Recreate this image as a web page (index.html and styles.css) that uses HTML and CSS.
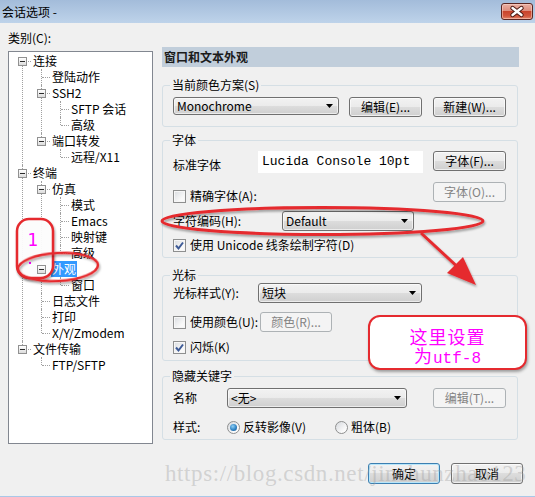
FILE: index.html
```html
<!DOCTYPE html>
<html lang="zh-CN">
<head>
<meta charset="utf-8">
<title>会话选项</title>
<link rel="stylesheet" href="styles.css">
</head>
<body>
<div class="window">
  <div class="titlebar">
    <span class="title">会话选项 -</span>
    <span class="close"><svg width="30" height="15" viewBox="0 0 30 15"><path d="M10.5 4 L19.5 11 M19.5 4 L10.5 11" stroke="#4a1a14" stroke-width="4.4" stroke-linecap="round"/><path d="M10.5 4 L19.5 11 M19.5 4 L10.5 11" stroke="#fff" stroke-width="2.4" stroke-linecap="round"/></svg></span>
  </div>

  <div class="content">
    <div class="left">
      <div class="cat">类别(C):</div>
      <div class="treebox">
        <ul class="tree">
          <li><div class="row"><span class="gut"><i class="box"></i></span><span class="lbl">连接</span></div>
            <ul>
              <li><div class="row"><span class="gut"></span><span class="lbl">登陆动作</span></div></li>
              <li><div class="row"><span class="gut"><i class="box"></i></span><span class="lbl">SSH2</span></div>
                <ul>
                  <li><div class="row"><span class="gut"></span><span class="lbl">SFTP 会话</span></div></li>
                  <li><div class="row"><span class="gut"></span><span class="lbl">高级</span></div></li>
                </ul>
              </li>
              <li><div class="row"><span class="gut"><i class="box"></i></span><span class="lbl">端口转发</span></div>
                <ul>
                  <li><div class="row"><span class="gut"></span><span class="lbl">远程/X11</span></div></li>
                </ul>
              </li>
            </ul>
          </li>
          <li><div class="row"><span class="gut"><i class="box"></i></span><span class="lbl">终端</span></div>
            <ul>
              <li><div class="row"><span class="gut"><i class="box"></i></span><span class="lbl">仿真</span></div>
                <ul>
                  <li><div class="row"><span class="gut"></span><span class="lbl">模式</span></div></li>
                  <li><div class="row"><span class="gut"></span><span class="lbl">Emacs</span></div></li>
                  <li><div class="row"><span class="gut"></span><span class="lbl">映射键</span></div></li>
                  <li><div class="row"><span class="gut"></span><span class="lbl">高级</span></div></li>
                </ul>
              </li>
              <li><div class="row"><span class="gut"><i class="box"></i></span><span class="lbl sel">外观</span></div>
                <ul>
                  <li><div class="row"><span class="gut"></span><span class="lbl">窗口</span></div></li>
                </ul>
              </li>
              <li><div class="row"><span class="gut"></span><span class="lbl">日志文件</span></div></li>
              <li><div class="row"><span class="gut"></span><span class="lbl">打印</span></div></li>
              <li><div class="row"><span class="gut"></span><span class="lbl">X/Y/Zmodem</span></div></li>
            </ul>
          </li>
          <li><div class="row"><span class="gut"><i class="box"></i></span><span class="lbl">文件传输</span></div>
            <ul>
              <li><div class="row"><span class="gut"></span><span class="lbl">FTP/SFTP</span></div></li>
            </ul>
          </li>
        </ul>
      </div>
    </div>

    <div class="right">
      <div class="hdr">窗口和文本外观</div>

      <fieldset class="grp g1">
        <legend>当前颜色方案(S)</legend>
        <div class="frow r-scheme">
          <div class="combo w-mono">Monochrome</div>
          <button class="btn b-edit">编辑(E)...</button>
          <button class="btn b-new">新建(W)...</button>
        </div>
      </fieldset>

      <fieldset class="grp g2">
        <legend>字体</legend>
        <div class="frow r-font">
          <span class="flabel w85 low">标准字体</span>
          <div class="fontbox">Lucida Console 10pt</div>
          <button class="btn push">字体(F)...</button>
        </div>
        <div class="frow r-exact">
          <label class="chk low"><span class="cb"></span>精确字体(A):</label>
          <button class="btn dis push">字体(O)...</button>
        </div>
        <div class="frow r-enc">
          <span class="flabel w109">字符编码(H):</span>
          <div class="combo w-enc">Default</div>
        </div>
        <div class="frow r-uni">
          <label class="chk"><span class="cb on"><svg width="11" height="11" viewBox="0 0 11 11"><path d="M2 5.5 L4.5 8.5 L9 2.5" fill="none" stroke="#3d5a96" stroke-width="2"/></svg></span>使用 Unicode 线条绘制字符(D)</label>
        </div>
      </fieldset>

      <fieldset class="grp g3">
        <legend>光标</legend>
        <div class="frow r-cur">
          <span class="flabel w85">光标样式(Y):</span>
          <div class="combo w-cur">短块</div>
        </div>
        <div class="frow r-color">
          <label class="chk w87"><span class="cb"></span>使用颜色(U):</label>
          <button class="btn dis b-color">颜色(R)...</button>
        </div>
        <div class="frow r-blink">
          <label class="chk"><span class="cb on"><svg width="11" height="11" viewBox="0 0 11 11"><path d="M2 5.5 L4.5 8.5 L9 2.5" fill="none" stroke="#3d5a96" stroke-width="2"/></svg></span>闪烁(K)</label>
        </div>
      </fieldset>

      <fieldset class="grp g4">
        <legend>隐藏关键字</legend>
        <div class="frow r-name">
          <span class="flabel w54">名称</span>
          <div class="combo w-name">&lt;无&gt;</div>
          <button class="btn dis push">编辑(T)...</button>
        </div>
        <div class="frow r-style">
          <span class="flabel w54">样式:</span>
          <label class="rad w108"><span class="rb on"></span>反转影像(V)</label>
          <label class="rad"><span class="rb"></span>粗体(B)</label>
        </div>
      </fieldset>
    </div>
  </div>

  <div class="footer">
    <button class="btn def">确定</button>
    <button class="btn">取消</button>
  </div>

  <svg class="marks" width="535" height="497" viewBox="0 0 535 497">
    <defs>
      <filter id="sh" x="-30%" y="-30%" width="160%" height="180%">
        <feDropShadow dx="1" dy="2" stdDeviation="1.2" flood-color="#000" flood-opacity="0.35"/>
      </filter>
    </defs>
    <rect x="17" y="219" width="36" height="59" rx="12" fill="#fff" fill-opacity="0.93" stroke="#e52a2f" stroke-width="2.5" filter="url(#sh)"/>
    <text x="33" y="246" class="one">1</text>
    <rect x="29" y="262" width="2" height="2" fill="#ff00ff"/>
    <ellipse cx="58" cy="267" rx="40" ry="14" fill="none" stroke="#e52a2f" stroke-width="2.5" filter="url(#sh)" transform="rotate(-3 58 267)"/>
    <ellipse cx="322.5" cy="221" rx="160.5" ry="13.5" fill="none" stroke="#e52a2f" stroke-width="3" filter="url(#sh)"/>
    <g filter="url(#sh)">
      <path d="M421 233 L462 271" stroke="#e52a2f" stroke-width="3"/>
      <polygon points="476,285 447,273 463,257" fill="#e52a2f"/>
    </g>
  </svg>

  <div class="note"><div class="nl">这里设置</div><div class="nl">为<span class="mono">utf-8</span></div></div>
  <div class="watermark">https://blog.csdn.net/jinchunzhao123</div>
</div>
</body>
</html>
```

FILE: styles.css
```css
* { box-sizing: border-box; }

body {
  margin: 0;
  width: 535px;
  height: 497px;
  overflow: hidden;
  background: #f0f0f0;
  font-family: "Noto Sans CJK SC", "Noto Sans", sans-serif;
  font-size: 12px;
  line-height: 16px;
  color: #000;
}

.window {
  position: relative;
  width: 535px;
  height: 497px;
  display: flex;
  flex-direction: column;
  border-bottom: 1px solid #a9c8e8;
}

/* title bar */
.titlebar {
  height: 23px;
  flex: none;
  display: flex;
  align-items: center;
  justify-content: space-between;
  padding: 0 2px 0 2px;
  background: linear-gradient(#a3bcda, #bed3ea);
}
.title { line-height: 16px; }
.close {
  width: 32px;
  height: 17px;
  display: flex;
  align-items: center;
  justify-content: center;
  border: 1px solid #5b2622;
  border-radius: 3px;
  background: linear-gradient(#eab0a3 0%, #de8d7d 45%, #c8442d 50%, #d2563d 80%, #e2876c 100%);
  box-shadow: inset 0 0 0 1px rgba(255, 220, 210, 0.5);
}

/* main area */
.content {
  display: flex;
  align-items: flex-start;
  gap: 9px;
  padding: 0 16px 0 8px;
}

.left {
  width: 145px;
  flex: none;
  padding-top: 7px;
  display: flex;
  flex-direction: column;
}
.cat { height: 16px; margin-bottom: 5px; }
.treebox {
  height: 393px;
  background: #fff;
  border: 1px solid #828790;
  padding-top: 1px;
}

/* tree */
.tree, .tree ul { list-style: none; margin: 0; padding: 0; }
.tree ul { padding-left: 19px; }
.tree li { position: relative; }
.tree li::before {
  content: "";
  position: absolute;
  left: 13px;
  top: 0;
  bottom: 0;
  border-left: 1px dotted #a0a0a0;
}
.tree li:last-child::before { bottom: auto; height: 8px; }
.tree > li:first-child::before { top: 8px; }
.row {
  position: relative;
  display: flex;
  align-items: center;
  height: 16px;
}
.row::before {
  content: "";
  position: absolute;
  left: 14px;
  top: 8px;
  width: 8px;
  border-top: 1px dotted #a0a0a0;
}
.gut { width: 23px; height: 16px; flex: none; position: relative; }
.box {
  position: absolute;
  left: 9px;
  top: 4px;
  width: 9px;
  height: 9px;
  border: 1px solid #919191;
  background: linear-gradient(#ffffff, #dcdcdc);
  z-index: 1;
}
.box::after {
  content: "";
  position: absolute;
  left: 1px;
  top: 3px;
  width: 5px;
  height: 1px;
  background: #2b2b2b;
}
.lbl { padding: 0 1px; line-height: 16px; white-space: nowrap; }
.lbl.sel { background: #3399ff; color: #fff; }

/* right panel */
.right { width: 357px; flex: none; padding-top: 24px; }
.hdr {
  height: 20px;
  line-height: 20px;
  padding-left: 2px;
  background: #c1cedb;
  font-weight: bold;
  color: #1b1b1b;
}
.grp {
  margin: 0;
  min-width: 0;
  width: 356px;
  padding: 0 11px 0 10px;
  border: 1px solid #d5dfe5;
  border-radius: 3px;
}
.grp legend {
  padding: 0 2px;
  margin-left: -3px;
  line-height: 14px;
}
.g1 { margin-top: 11px; height: 49px; }
.g2 { margin-top: 6px; height: 125px; }
.g3 { margin-top: 10px; height: 93px; }
.g4 { margin-top: 8px; height: 71px; }

.frow { display: flex; align-items: center; }
.r-scheme { margin-top: 5px; align-items: flex-start; }
.r-font { margin-top: 4px; height: 22px; align-items: flex-start; }
.r-exact { margin-top: 9px; height: 20px; align-items: flex-start; }
.r-enc { margin-top: 9px; height: 20px; }
.r-uni { margin-top: 6px; height: 16px; }
.r-cur { margin-top: 1px; height: 20px; }
.r-color { margin-top: 9px; height: 20px; }
.r-blink { margin-top: 7px; height: 16px; }
.r-name { margin-top: 5px; height: 20px; }
.r-style { margin-top: 11px; height: 16px; }

.flabel { flex: none; white-space: nowrap; }
.low { margin-top: 6px; }
.w54 { width: 54px; }
.w85 { width: 85px; }
.w87 { width: 87px; }
.w108 { width: 108px; }
.w109 { width: 109px; }
.push { margin-left: auto; }

/* buttons */
.btn {
  flex: none;
  width: 73px;
  height: 20px;
  padding: 0;
  font: inherit;
  line-height: 18px;
  color: #000;
  text-align: center;
  border: 1px solid #707070;
  border-radius: 3px;
  background: linear-gradient(#f2f2f2 0%, #ebebeb 50%, #dddddd 50%, #cfcfcf 100%);
  box-shadow: inset 0 0 0 1px rgba(255, 255, 255, 0.65);
}
.btn.dis {
  border-color: #adb2b5;
  background: #f4f4f4;
  color: #838383;
  box-shadow: none;
}
.b-edit { margin-left: 10px; }
.b-new { margin-left: 11px; }
.b-color { width: 72px; }

/* combo boxes */
.combo {
  position: relative;
  flex: none;
  height: 20px;
  line-height: 18px;
  padding-left: 3px;
  border: 1px solid #707070;
  border-radius: 3px;
  background: linear-gradient(#f2f2f2 0%, #ebebeb 50%, #dddddd 50%, #cfcfcf 100%);
  box-shadow: inset 0 0 0 1px rgba(255, 255, 255, 0.6);
  white-space: nowrap;
}
.combo::after {
  content: "";
  position: absolute;
  right: 5px;
  top: 7px;
  width: 7px;
  height: 4px;
  background: #000;
  clip-path: polygon(0 0, 100% 0, 50% 100%);
}
.w-mono { width: 166px; height: 18px; line-height: 16px; }
.w-mono::after { top: 6px; }
.w-enc { width: 132px; }
.w-cur { width: 164px; }
.w-name { width: 180px; }

.fontbox {
  flex: none;
  width: 165px;
  height: 22px;
  padding-left: 4px;
  background: #fff;
  font-family: "Liberation Mono", monospace;
  font-size: 13px;
  line-height: 22px;
}

/* check boxes and radios */
.chk, .rad {
  display: flex;
  align-items: center;
  flex: none;
  white-space: nowrap;
}
.cb {
  width: 13px;
  height: 13px;
  margin-right: 4px;
  flex: none;
  display: flex;
  align-items: center;
  justify-content: center;
  border: 1px solid #8e8f8f;
  background: linear-gradient(135deg, #d9dce0 0%, #f9f9f9 70%);
  box-shadow: inset 0 0 0 1px #f6f6f6;
}
.rb {
  width: 13px;
  height: 13px;
  margin-right: 3px;
  flex: none;
  border-radius: 50%;
  border: 1px solid #8e8f8f;
  background: linear-gradient(135deg, #d6d9de 0%, #fbfbfb 75%);
  position: relative;
}
.rb.on::after {
  content: "";
  position: absolute;
  left: 2px;
  top: 2px;
  width: 7px;
  height: 7px;
  border-radius: 50%;
  background: radial-gradient(circle at 40% 35%, #8fd0f5 0%, #2f83c4 55%, #16508a 100%);
}

/* footer */
.footer {
  display: flex;
  justify-content: flex-end;
  gap: 11px;
  padding-right: 12px;
  margin-top: 19px;
}
.footer .btn { width: 72px; height: 21px; line-height: 19px; }
.btn.def {
  border-color: #3c7fb1;
  box-shadow: inset 0 0 0 1px #b8e6fa;
}

/* annotations */
.marks {
  position: absolute;
  left: 0;
  top: 0;
  pointer-events: none;
}
.one {
  font-family: "DejaVu Sans", sans-serif;
  font-size: 17px;
  fill: #ff00ff;
  text-anchor: middle;
}
.note {
  position: absolute;
  left: 368px;
  top: 315px;
  width: 159px;
  height: 55px;
  padding-top: 10px;
  border: 2px solid #e52a2f;
  border-radius: 12px;
  background: #fff;
  box-shadow: 1px 2px 3px rgba(0, 0, 0, 0.35);
  color: #ff00ff;
  text-align: center;
}
.nl {
  height: 19px;
  font-size: 18px;
  line-height: 19px;
  letter-spacing: 1px;
}
.note .mono {
  font-family: "Liberation Mono", monospace;
  font-size: 16px;
  letter-spacing: 0;
}
.watermark {
  position: absolute;
  left: 165px;
  top: 459px;
  font-family: "Liberation Serif", serif;
  font-size: 23px;
  line-height: 30px;
  letter-spacing: 0.6px;
  color: rgba(160, 160, 160, 0.4);
  white-space: nowrap;
  pointer-events: none;
}
```
